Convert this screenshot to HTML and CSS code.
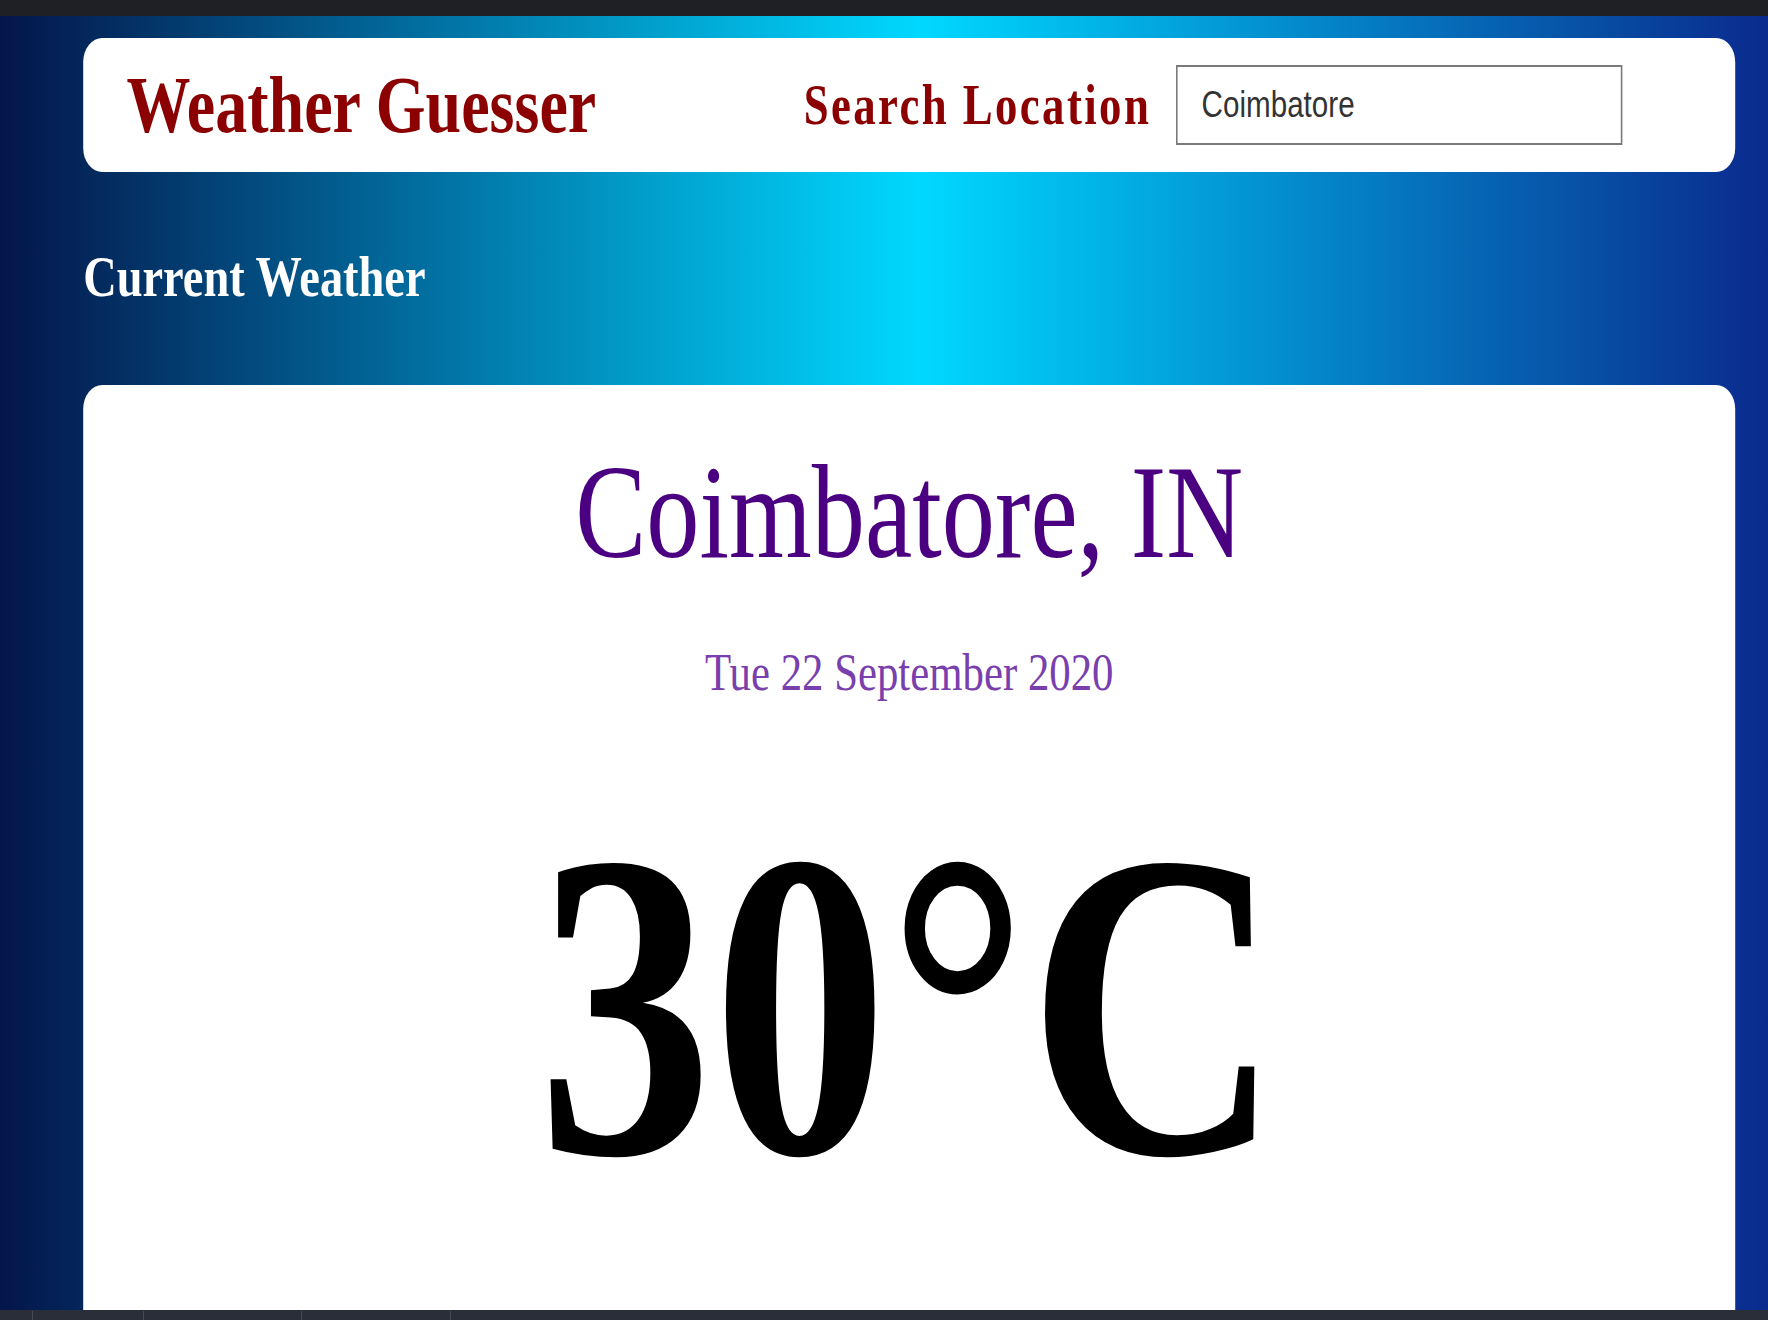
FILE: index.html
```html
<!DOCTYPE html>
<html lang="en">
<head>
<meta charset="utf-8">
<title>Weather Guesser</title>
<link rel="stylesheet" href="styles.css">
</head>
<body>
  <div class="topbar"></div>
  <div class="viewport">
    <div class="stage">
      <header class="header-card">
        <h1 class="brand">Weather Guesser</h1>
        <div class="search">
          <label class="search-label" for="loc">Search Location</label>
          <input id="loc" class="search-input" type="text" value="Coimbatore">
        </div>
      </header>
      <h2 class="section-title">Current Weather</h2>
      <section class="weather-card">
        <div class="city">Coimbatore, IN</div>
        <div class="date">Tue 22 September 2020</div>
        <div class="temp">30°C</div>
      </section>
    </div>
  </div>
  <div class="statusbar">
    <span class="seg seg-a"></span>
    <span class="seg seg-b"></span>
    <span class="seg seg-c"></span>
    <span class="seg seg-d"></span>
  </div>
</body>
</html>
```

FILE: styles.css
```css
html, body {
  margin: 0;
  padding: 0;
  width: 1768px;
  height: 1320px;
  overflow: hidden;
}

body {
  background: linear-gradient(90deg, #04154a 0%, #026b9d 23%, #00d8ff 52%, #0576bf 79%, #0a2a8e 100%);
  font-family: "Liberation Serif", "Times New Roman", serif;
}

.topbar {
  height: 16px;
  background: #1f1f26;
}

.viewport {
  width: 1768px;
  height: 1304px;
  overflow: hidden;
}

.stage {
  width: 2200px;
  box-sizing: border-box;
  padding: 0 31px 0 104px;
  transform: scaleX(0.8);
  transform-origin: 0 0;
}

.header-card {
  margin-top: 22px;
  height: 134px;
  background: #ffffff;
  border-radius: 24px;
  display: flex;
  align-items: center;
  justify-content: space-between;
  padding: 0 141px 0 54px;
}

.brand {
  margin: 0;
  font-size: 80px;
  line-height: 1;
  font-weight: bold;
  color: #8b0000;
}

.search {
  display: flex;
  align-items: center;
  gap: 31px;
}

.search-label {
  font-size: 56px;
  line-height: 1;
  font-weight: bold;
  letter-spacing: 3px;
  color: #8b0000;
}

.search-input {
  box-sizing: border-box;
  width: 558px;
  height: 80px;
  margin: 0;
  padding: 0 0 0 30px;
  border: 2px solid #7a7a7a;
  border-radius: 0;
  background: #ffffff;
  font-family: "Liberation Sans", Arial, sans-serif;
  font-size: 37px;
  color: #333333;
  outline: none;
}

.section-title {
  margin: 76px 0 0;
  font-size: 58px;
  line-height: 1;
  font-weight: bold;
  color: #ffffff;
}

.weather-card {
  margin-top: 79px;
  height: 1000px;
  box-sizing: border-box;
  padding-top: 61px;
  background: #ffffff;
  border-radius: 24px;
  text-align: center;
}

.city {
  font-size: 133px;
  line-height: 1;
  color: #4b0082;
}

.date {
  margin-top: 67px;
  font-size: 53.5px;
  line-height: 1;
  color: #7940ad;
}

.temp {
  margin-top: 87px;
  font-size: 438px;
  line-height: 1;
  font-weight: bold;
  color: #000000;
}

.statusbar {
  position: fixed;
  left: 0;
  right: 0;
  bottom: 0;
  height: 9px;
  background: #2a2e38;
  border-top: 1px solid rgba(40, 45, 55, 0.3);
  display: flex;
}

.seg {
  height: 100%;
  border-right: 1px solid #454a56;
}

.seg-a { width: 32px; }
.seg-b { width: 110px; }
.seg-c { width: 157px; }
.seg-d { width: 148px; }
```
